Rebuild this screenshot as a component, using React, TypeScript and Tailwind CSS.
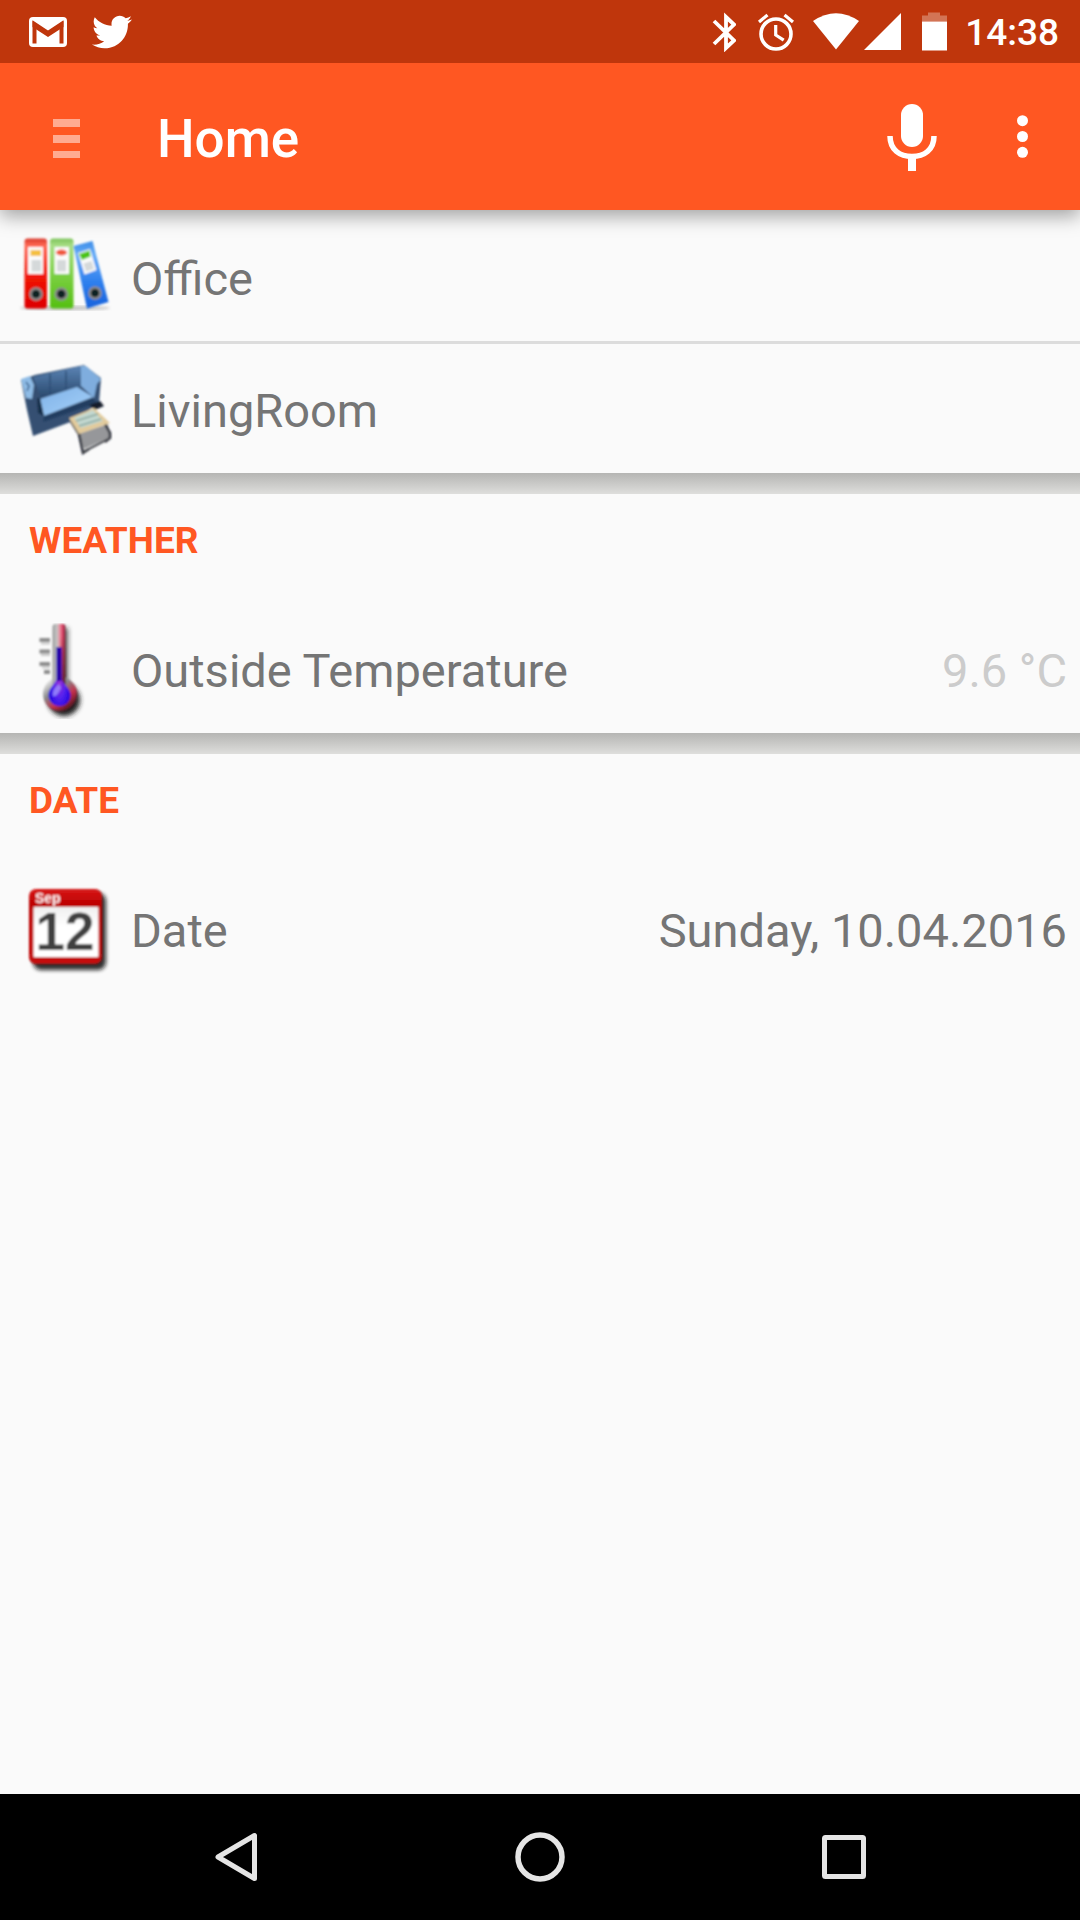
import type { ReactNode } from "react";
import { FaTwitter } from "react-icons/fa";

function StatusBar() {
  return (
    <div className="relative z-20 flex h-[63px] items-center justify-between bg-[#bf360c] pl-7 pr-[21px] text-white">
      <div className="flex items-center gap-6">
        <svg className="h-8 w-10" viewBox="0 0 40 32" aria-label="Gmail">
          <rect x="1" y="1" width="38" height="30" rx="4" fill="#fff" />
          <path d="M6.500 27.500V8l13.500 9L33.500 8v19.500" fill="none" stroke="#bf360c" strokeWidth="4" />
          <path d="M4.500 5l15.500 10.500L35.500 5v6L20 21 4.500 11z" fill="#bf360c" />
          <path d="M7 4h26L20 13z" fill="#fff" />
        </svg>
        <FaTwitter size={40} aria-label="Twitter" />
      </div>
      <div className="flex items-center">
        <svg className="mr-5 h-10 w-6" viewBox="713 11.500 24 40" aria-label="Bluetooth">
          <path d="M715 20.500 735 40 727 47.500V16.500L735 24 715 43.500" fill="none" stroke="#fff" strokeWidth="3.800" />
        </svg>
        <svg className="mr-4 h-10 w-10" viewBox="757 11.500 40 40" aria-label="Alarm">
          <circle cx="777" cy="33.500" r="15" fill="none" stroke="#fff" strokeWidth="3.600" />
          <path d="M776.700 24.500v10l8 5.200M760 21.500l8.500-7M794 21.500l-8.500-7" fill="none" stroke="#fff" strokeWidth="3.200" />
        </svg>
        <svg className="mr-1 h-10 w-12" viewBox="812 11.500 48 40" aria-label="Wi-Fi">
          <path d="M813 20.500Q836 5 859 20.500L836 49z" fill="#fff" />
        </svg>
        <svg className="mr-5 h-10 w-[38px]" viewBox="864 11.500 38 40" aria-label="Signal">
          <path d="M864 49.500 901 12.500V49.500z" fill="#fff" />
        </svg>
        <svg className="mr-[17px] h-10 w-[26px]" viewBox="922 11.500 26 40" aria-label="Battery">
          <path d="M922 15h6v-3h12v3h7v6h-25z" fill="#d37455" />
          <path d="M922 21h25v29h-25z" fill="#fff" />
        </svg>
        <span className="pt-0.5 text-[37px] font-medium leading-[61px]">14:38</span>
      </div>
    </div>
  );
}

function AppBar() {
  return (
    <header className="relative z-10 flex h-[147px] items-center bg-[#ff5722] pl-[41px] pr-[34px] text-white shadow-[0_6px_18px_rgba(0,0,0,0.36)]">
      <button aria-label="Open menu">
        <svg className="h-12 w-12" viewBox="41 113 48 48">
          <path d="M53 119h27v8H53zM53 135h27v8H53zM53 151h27v7H53z" fill="#ffab91" />
        </svg>
      </button>
      <h1 className="ml-[68px] flex-1 pt-1 text-[53px] font-medium leading-[64px]">Home</h1>
      <button aria-label="Voice input">
        <svg className="h-[72px] w-[72px]" viewBox="876 101 72 72">
          <rect x="901" y="104" width="22" height="43" rx="11" fill="#fff" />
          <path d="M890 136c0 14 10 20.500 22 20.500s22-6.500 22-20.500" fill="none" stroke="#fff" strokeWidth="5.500" />
          <path d="M908 156h8v15h-8z" fill="#fff" />
        </svg>
      </button>
      <button className="ml-[50px]" aria-label="More options">
        <svg className="h-12 w-12" viewBox="998 113 48 48">
          <g fill="#fff">
            <circle cx="1022.500" cy="120.700" r="5.500" />
            <circle cx="1022.500" cy="136.500" r="5.500" />
            <circle cx="1022.500" cy="152.300" r="5.500" />
          </g>
        </svg>
      </button>
    </header>
  );
}

function BindersIcon() {
  return (
    <svg className="h-24 w-24 shrink-0" viewBox="18 231 96 96" aria-hidden="true">
      <defs>
        <linearGradient id="binderRed" x1="0" y1="0" x2="0" y2="1">
          <stop offset="0" stopColor="#d8382c" />
          <stop offset=".1" stopColor="#ff6a55" />
          <stop offset=".55" stopColor="#f01507" />
          <stop offset="1" stopColor="#dd0000" />
        </linearGradient>
        <linearGradient id="binderGreen" x1="0" y1="0" x2="0" y2="1">
          <stop offset="0" stopColor="#7cc35a" />
          <stop offset=".1" stopColor="#a8de85" />
          <stop offset=".55" stopColor="#79cf40" />
          <stop offset="1" stopColor="#55bf12" />
        </linearGradient>
        <linearGradient id="binderBlue" x1="0" y1="0" x2="0" y2="1">
          <stop offset="0" stopColor="#3d8ce8" />
          <stop offset=".2" stopColor="#65acf7" />
          <stop offset=".6" stopColor="#2f80ee" />
          <stop offset="1" stopColor="#1762dc" />
        </linearGradient>
        <filter id="binderSoft"><feGaussianBlur stdDeviation="1.500" /></filter>
        <filter id="binderEdge"><feGaussianBlur stdDeviation="1.100" /></filter>
      </defs>
      <ellipse cx="66" cy="308" rx="45" ry="2.500" fill="#999" opacity=".5" filter="url(#binderSoft)" />
      <g filter="url(#binderEdge)">
        <rect x="25.500" y="238.500" width="22.500" height="70" rx="3" fill="url(#binderRed)" />
        <rect x="51" y="238.500" width="23.500" height="70" rx="3" fill="url(#binderGreen)" />
        <path d="M74.500 246 93.500 241 109.500 302 88 308.500z" fill="url(#binderBlue)" />
        <path d="M29 247h15v27H29zM55.500 247H70v27H55.500zM79 253 91 249l6.500 21-12 4.500z" fill="#fbfbfb" />
        <path d="M31.500 250h10.500v6H31.500z" fill="#f4c03f" />
        <ellipse cx="62.500" cy="252.500" rx="5.500" ry="3" fill="#f0583e" />
        <path d="M80 254 90.500 250.500l1 6-8.500 3.500z" fill="#4cc416" />
        <path d="M32.500 260h9.500v11.500h-9.500zM58 260h9v11.500h-9zM84.500 263.500l8-2.500 2.500 8-8 2.500z" fill="#d5d9da" />
        <g fill="#102020" stroke="#8a8a8a" strokeWidth="2.500">
          <circle cx="37" cy="294" r="5.500" />
          <circle cx="62.300" cy="294" r="5.500" />
          <circle cx="96" cy="293" r="5.500" />
        </g>
      </g>
    </svg>
  );
}

function SofaIcon() {
  return (
    <svg className="h-24 w-24 shrink-0" viewBox="18 363 96 96" aria-hidden="true">
      <defs>
        <linearGradient id="sofaBack" x1="0" y1="0" x2="0" y2="1">
          <stop offset="0" stopColor="#5b84b5" />
          <stop offset="1" stopColor="#29486c" />
        </linearGradient>
        <linearGradient id="sofaSeat" x1="0" y1="0" x2="1" y2="1">
          <stop offset="0" stopColor="#7fb1e6" />
          <stop offset="1" stopColor="#a6d2fb" />
        </linearGradient>
        <filter id="sofaEdge"><feGaussianBlur stdDeviation="1" /></filter>
      </defs>
      <g filter="url(#sofaEdge)">
        <path d="M22 380 36 375 85 365 102 378 100 403 74 421 34 436 28 410z" fill="#344f72" />
        <path d="M34 377 82 366V388L42 398z" fill="url(#sofaBack)" />
        <path d="M51 374v21M67 371v20" stroke="#2c4d76" strokeWidth="1.500" />
        <path d="M82 366 87 366 102 379 98 384 95 398 82 386z" fill="#7fadde" />
        <path d="M22 379 31 376 35 385 33 399 27 398z" fill="#8fbce6" />
        <path d="M27 382l3 4-2 5" fill="none" stroke="#3b618c" strokeWidth="1.500" />
        <path d="M41 399 78 387 94 397 45 416z" fill="url(#sofaSeat)" />
        <path d="M38 398 41 398 45 416 39 413z" fill="#192d49" />
        <path d="M45 416 94 398 98 403 44 422z" fill="#243e61" />
        <path d="M90 405 101 401 105 406 96 410z" fill="#171f2b" />
        <path d="M79 434 109 424 111 437 85 449z" fill="#96979a" />
        <path d="M72 421 80 434 84 453 90 449M106 424 111 433v5l-5 4" fill="none" stroke="#252934" strokeWidth="2.500" />
        <path d="M84 452 111 438" stroke="#4b4d53" strokeWidth="2" />
        <path d="M70 418 95 408 111 423 80 434z" fill="#e2cb9c" />
        <path d="M75 418 94 410 104 421 82 428z" fill="#c3d8d0" />
        <path d="M77 421 99 414M80 426 102 419" stroke="#8ba79e" strokeWidth="1.500" />
      </g>
    </svg>
  );
}

function ThermometerIcon() {
  return (
    <svg className="h-24 w-24 shrink-0" viewBox="18 623 96 96" aria-hidden="true">
      <defs>
        <linearGradient id="tube" x1="0" y1="0" x2="1" y2="0">
          <stop offset="0" stopColor="#999" />
          <stop offset=".35" stopColor="#c7c7c7" />
          <stop offset=".6" stopColor="#ef7f96" />
          <stop offset=".8" stopColor="#d33358" />
          <stop offset="1" stopColor="#76303e" />
        </linearGradient>
        <linearGradient id="bulb" x1=".1" y1=".1" x2=".8" y2="1">
          <stop offset="0" stopColor="#f2f2f2" />
          <stop offset=".35" stopColor="#888" />
          <stop offset=".65" stopColor="#c5304c" />
          <stop offset="1" stopColor="#3a1116" />
        </linearGradient>
        <linearGradient id="tubeShade" x1="0" y1="0" x2="0" y2="1">
          <stop offset=".2" stopColor="#401a20" stopOpacity="0" />
          <stop offset="1" stopColor="#401a20" stopOpacity=".7" />
        </linearGradient>
        <radialGradient id="drop" cx=".5" cy=".6" r=".55">
          <stop offset="0" stopColor="#9a30d8" />
          <stop offset=".5" stopColor="#5320ee" />
          <stop offset="1" stopColor="#1b00dc" />
        </radialGradient>
        <filter id="thermoShadow" x="-50%" y="-20%" width="200%" height="150%"><feGaussianBlur stdDeviation="2.500" /></filter>
        <filter id="thermoEdge"><feGaussianBlur stdDeviation="1" /></filter>
      </defs>
      <g fill="#222" filter="url(#thermoShadow)">
        <path d="M58 628h11v55H58z" opacity=".7" />
        <circle cx="65" cy="700" r="16" />
      </g>
      <g filter="url(#thermoEdge)">
        <path d="M40.500 640H51M40.500 651.500H51M40.500 664H51M45 672h6" stroke="#8e8e8e" strokeWidth="4" />
        <path d="M42 643.500h9M42 655h9M43 667.500h8" stroke="#c9c9c9" strokeWidth="2" />
        <circle cx="61" cy="694" r="17" fill="url(#bulb)" />
        <rect x="53.500" y="624" width="13" height="62" rx="3" fill="url(#tube)" />
        <rect x="61" y="624" width="5.500" height="60" fill="url(#tubeShade)" />
        <path d="M57.500 647h5v32c2 6 9 9 9 16a11 11 0 0 1-22 0c0-7 6-10 8-16z" fill="url(#drop)" />
        <path d="M57.500 647h5v34h-5z" fill="#2500a8" />
        <path d="M60 684c-5 4-7 8-6 12 3 1 5-2 8-8z" fill="#a39aff" opacity=".75" />
      </g>
    </svg>
  );
}

function CalendarIcon() {
  return (
    <svg className="h-24 w-24 shrink-0" viewBox="18 883 96 96" aria-hidden="true">
      <defs>
        <linearGradient id="calRed" x1="0" y1="0" x2="0" y2="1">
          <stop offset="0" stopColor="#d81717" />
          <stop offset=".2" stopColor="#bd0000" />
          <stop offset="1" stopColor="#c40808" />
        </linearGradient>
        <linearGradient id="calPage" x1="0" y1="0" x2="0" y2="1">
          <stop offset="0" stopColor="#f0f0f0" />
          <stop offset=".4" stopColor="#fff" />
        </linearGradient>
        <filter id="calShadow"><feGaussianBlur stdDeviation="2" /></filter>
        <filter id="calEdge"><feGaussianBlur stdDeviation="1" /></filter>
      </defs>
      <rect x="34" y="893" width="73" height="77" rx="8" fill="#111" opacity=".85" filter="url(#calShadow)" />
      <g filter="url(#calEdge)">
        <rect x="30" y="889" width="73" height="75" rx="7" fill="url(#calRed)" />
        <rect x="34.500" y="907" width="65" height="50" rx="1" fill="url(#calPage)" />
        <text x="36" y="903" fill="#fff0f0" fontFamily="Liberation Sans, sans-serif" fontWeight="700" fontSize="14">Sep</text>
        <text x="66" y="950" textAnchor="middle" fill="#404040" fontFamily="Liberation Sans, sans-serif" fontWeight="700" fontSize="53">12</text>
      </g>
    </svg>
  );
}

function Row({ icon, label, children }: { icon: ReactNode; label: string; children?: ReactNode }) {
  return (
    <div className="flex h-[129px] items-center gap-[18px] pl-[17px] pr-[13px] pt-[5px] text-[47px] leading-[56px] text-[#757575]">
      {icon}
      <span className="flex-1">{label}</span>
      {children}
    </div>
  );
}

function SectionGap() {
  return <div className="h-[21px] bg-linear-to-b from-[#b5b5b3] to-[#dededc]" />;
}

function SectionTitle({ children }: { children: ReactNode }) {
  return <h2 className="px-[29px] pb-[17px] text-[37px] font-bold leading-[93px] text-[#ff5722]">{children}</h2>;
}

function NavBar() {
  return (
    <nav className="flex h-[126px] items-center justify-center gap-0.5 bg-black">
      <button className="flex w-[28%] justify-center" aria-label="Back">
        <svg className="h-[52px] w-[52px]" viewBox="210 1831 52 52">
          <path d="M254.500 1835.500v43L218 1857z" fill="none" stroke="#e5e5e5" strokeWidth="5" strokeLinejoin="round" />
        </svg>
      </button>
      <button className="flex w-[28%] justify-center" aria-label="Home screen">
        <svg className="h-[52px] w-[52px]" viewBox="0 0 52 52">
          <circle cx="26" cy="26" r="22" fill="none" stroke="#e5e5e5" strokeWidth="5.500" />
        </svg>
      </button>
      <button className="flex w-[28%] justify-center" aria-label="Recent apps">
        <svg className="h-[52px] w-[52px]" viewBox="0 0 52 52">
          <rect x="6.500" y="6.500" width="39" height="39" rx="1" fill="none" stroke="#e5e5e5" strokeWidth="5" strokeLinejoin="round" />
        </svg>
      </button>
    </nav>
  );
}

export default function App() {
  return (
    <div className="flex min-h-screen flex-col bg-[#fafafa] font-['Roboto',sans-serif]">
      <StatusBar />
      <AppBar />
      <main className="flex-1 pt-0.5">
        <Row icon={<BindersIcon />} label="Office" />
        <div className="h-[3px] bg-[#dcdcdc]" />
        <Row icon={<SofaIcon />} label="LivingRoom" />
        <SectionGap />
        <section>
          <SectionTitle>WEATHER</SectionTitle>
          <Row icon={<ThermometerIcon />} label="Outside Temperature">
            <span className="text-[#cccccc]">9.6 °C</span>
          </Row>
        </section>
        <SectionGap />
        <section>
          <SectionTitle>DATE</SectionTitle>
          <Row icon={<CalendarIcon />} label="Date">
            <span>Sunday, 10.04.2016</span>
          </Row>
        </section>
      </main>
      <NavBar />
    </div>
  );
}
